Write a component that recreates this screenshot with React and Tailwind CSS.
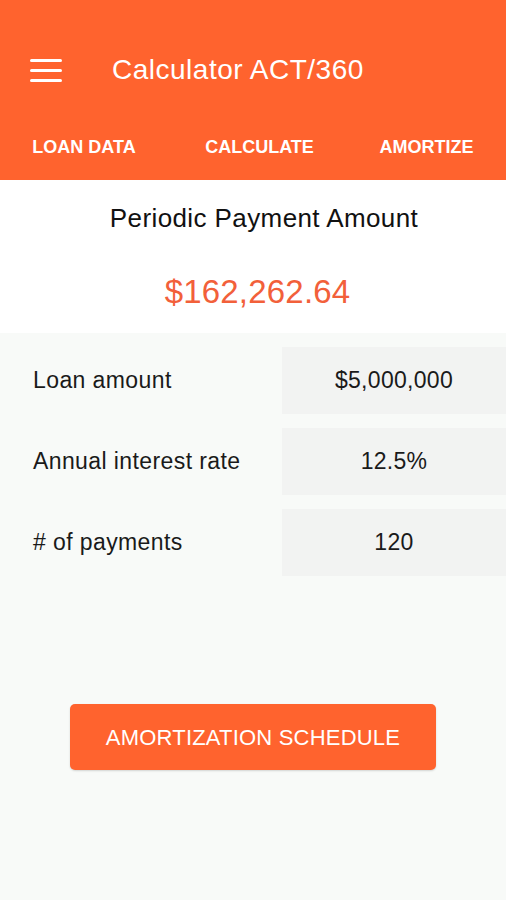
export default function App() {
  const rows = [
    ["Loan amount", "$5,000,000"],
    ["Annual interest rate", "12.5%"],
    ["# of payments", "120"],
  ];
  return (
    <div className="w-[506px] h-[900px] flex flex-col bg-[#f8faf8]" style={{ fontFamily: '"Liberation Sans", Arial, sans-serif' }}>
      <div className="bg-[#ff632e] h-[180px] flex flex-col text-white">
        <div className="flex items-center h-[116px] pt-[24px]">
          <div className="w-[112px] pl-[30px] flex flex-col gap-[7px]">
            <div className="w-[32px] h-[3px] bg-white rounded-full" />
            <div className="w-[32px] h-[3px] bg-white rounded-full" />
            <div className="w-[32px] h-[3px] bg-white rounded-full" />
          </div>
          <div className="text-[28px] leading-none tracking-[0.5px]">Calculator ACT/360</div>
        </div>
        <div className="flex-1 flex items-center pb-[1px] text-[18px] font-bold">
          <div className="w-[168px] text-center">LOAN DATA</div>
          <div className="w-[170px] text-center pl-[13px]">CALCULATE</div>
          <div className="w-[168px] text-center pl-[9px]">AMORTIZE</div>
        </div>
      </div>
      <div className="bg-white h-[153px] flex flex-col items-center">
        <div className="h-[76px] flex items-center pl-[22px] text-[26px] tracking-[0.4px] text-[#111]">Periodic Payment Amount</div>
        <div className="h-[72px] flex items-center pl-[9px] text-[33px] tracking-[0.2px] text-[#f2603a]">$162,262.64</div>
      </div>
      <div className="flex flex-col gap-[14px] pt-[14px]">
        {rows.map(([l, v]) => (
          <div key={l} className="flex h-[67px]">
            <div className="flex-1 flex items-center pl-[33px] text-[23px] tracking-[0.4px] text-[#1a1a1a]">{l}</div>
            <div className="w-[224px] bg-[#f2f3f2] flex items-center justify-center text-[23px] tracking-[0.3px] text-[#1a1a1a]">{v}</div>
          </div>
        ))}
      </div>
      <div className="flex justify-center mt-[128px]">
        <div className="w-[366px] h-[66px] bg-[#ff632e] rounded-[5px] flex items-center justify-center text-white text-[22px] tracking-[0.2px] shadow-[0_1px_2px_rgba(0,0,0,0.15)]">
          AMORTIZATION SCHEDULE
        </div>
      </div>
    </div>
  );
}
